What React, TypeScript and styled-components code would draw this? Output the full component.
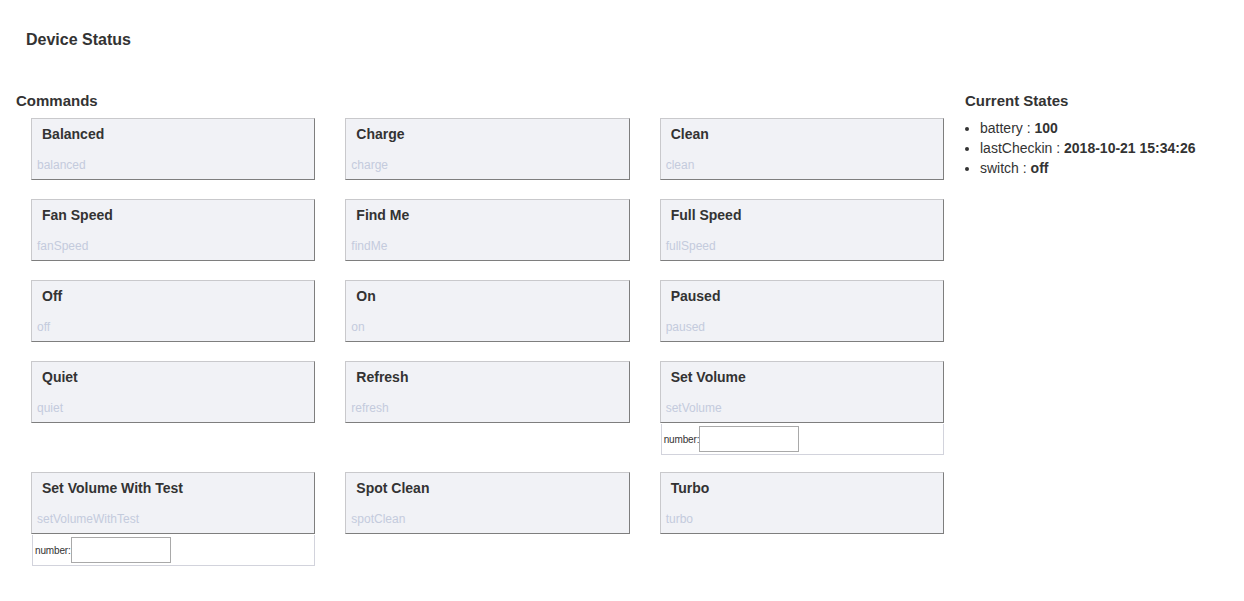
import styled, { createGlobalStyle } from "styled-components";

type Command = { label: string; name: string; input?: string };

const commands: Command[] = [
  { label: "Balanced", name: "balanced" },
  { label: "Charge", name: "charge" },
  { label: "Clean", name: "clean" },
  { label: "Fan Speed", name: "fanSpeed" },
  { label: "Find Me", name: "findMe" },
  { label: "Full Speed", name: "fullSpeed" },
  { label: "Off", name: "off" },
  { label: "On", name: "on" },
  { label: "Paused", name: "paused" },
  { label: "Quiet", name: "quiet" },
  { label: "Refresh", name: "refresh" },
  { label: "Set Volume", name: "setVolume", input: "number" },
  { label: "Set Volume With Test", name: "setVolumeWithTest", input: "number" },
  { label: "Spot Clean", name: "spotClean" },
  { label: "Turbo", name: "turbo" },
];

const states = [
  { name: "battery", value: "100" },
  { name: "lastCheckin", value: "2018-10-21 15:34:26" },
  { name: "switch", value: "off" },
];

const App = () => {
  return (
    <Page>
      <GlobalStyle />
      <Title>Device Status</Title>
      <Main>
        <CommandsColumn>
          <SectionHeading>Commands</SectionHeading>
          <CommandGrid>
            {commands.map((c) => (
              <Cell key={c.name} $hasInput={!!c.input}>
                <CommandButton>
                  <CommandLabel>{c.label}</CommandLabel>
                  <CommandName>{c.name}</CommandName>
                </CommandButton>
                {c.input && (
                  <ParamBox>
                    <ParamLabel>{c.input}:</ParamLabel>
                    <ParamInput type="text" />
                  </ParamBox>
                )}
              </Cell>
            ))}
          </CommandGrid>
        </CommandsColumn>
        <StatesColumn>
          <SectionHeading>Current States</SectionHeading>
          <StateList>
            {states.map((s) => (
              <li key={s.name}>
                {s.name} : <b>{s.value}</b>
              </li>
            ))}
          </StateList>
        </StatesColumn>
      </Main>
    </Page>
  );
};

export default App;

const GlobalStyle = createGlobalStyle`
  body {
    margin: 0;
    background: #fff;
    color: #333;
    font-family: "Liberation Sans", Arial, Helvetica, sans-serif;
  }
`;

const Page = styled.div`
  width: 1244px;
  min-height: 601px;
`;

const Title = styled.div`
  padding: 31px 0 0 26px;
  font-size: 16px;
  line-height: 18px;
  font-weight: bold;
  color: #333;
`;

const Main = styled.div`
  display: flex;
  margin-top: 43px;
`;

const CommandsColumn = styled.div`
  width: 928px;
  padding-left: 16px;
`;

const SectionHeading = styled.div`
  font-size: 15px;
  line-height: 17px;
  font-weight: bold;
  color: #333;
  margin-bottom: 9px;
`;

const CommandGrid = styled.div`
  margin-left: 15px;
  width: 913px;
  display: grid;
  grid-template-columns: repeat(3, 1fr);
  column-gap: 30px;
  row-gap: 17px;
  align-items: start;
`;

const Cell = styled.div<{ $hasInput: boolean }>`
  display: flex;
  flex-direction: column;
  padding-bottom: ${(p) => (p.$hasInput ? 0 : 2)}px;
`;

const CommandButton = styled.div`
  box-sizing: border-box;
  height: 62px;
  background: #f1f2f6;
  border-style: solid;
  border-width: 1px;
  border-color: #c9c9cc #7e7e7e #7e7e7e #c9c9cc;
  padding: 7px 5px 0;
`;

const CommandLabel = styled.div`
  padding-left: 5px;
  font-size: 14px;
  line-height: 17px;
  font-weight: bold;
  color: #333;
`;

const CommandName = styled.div`
  margin-top: 15px;
  font-size: 12px;
  line-height: 14px;
  color: #c4cbdd;
`;

const ParamBox = styled.div`
  box-sizing: border-box;
  margin: 1px 0 0 1px;
  height: 31px;
  border: 1px solid #d2d3dc;
  border-top: none;
  display: flex;
  align-items: center;
  padding-left: 2px;
`;

const ParamLabel = styled.span`
  font-size: 10px;
  letter-spacing: -0.15px;
  color: #333;
`;

const ParamInput = styled.input`
  box-sizing: border-box;
  width: 100px;
  height: 26px;
  margin: 0;
  padding: 2px 4px;
  border: 1px solid #a9a9a9;
  background: #fff;
  font-family: inherit;
`;

const StatesColumn = styled.div`
  padding-left: 21px;
`;

const StateList = styled.ul`
  margin: 0;
  padding-left: 15px;
  font-size: 14px;
  line-height: 20px;
  color: #333;

  b {
    font-weight: bold;
  }
`;
